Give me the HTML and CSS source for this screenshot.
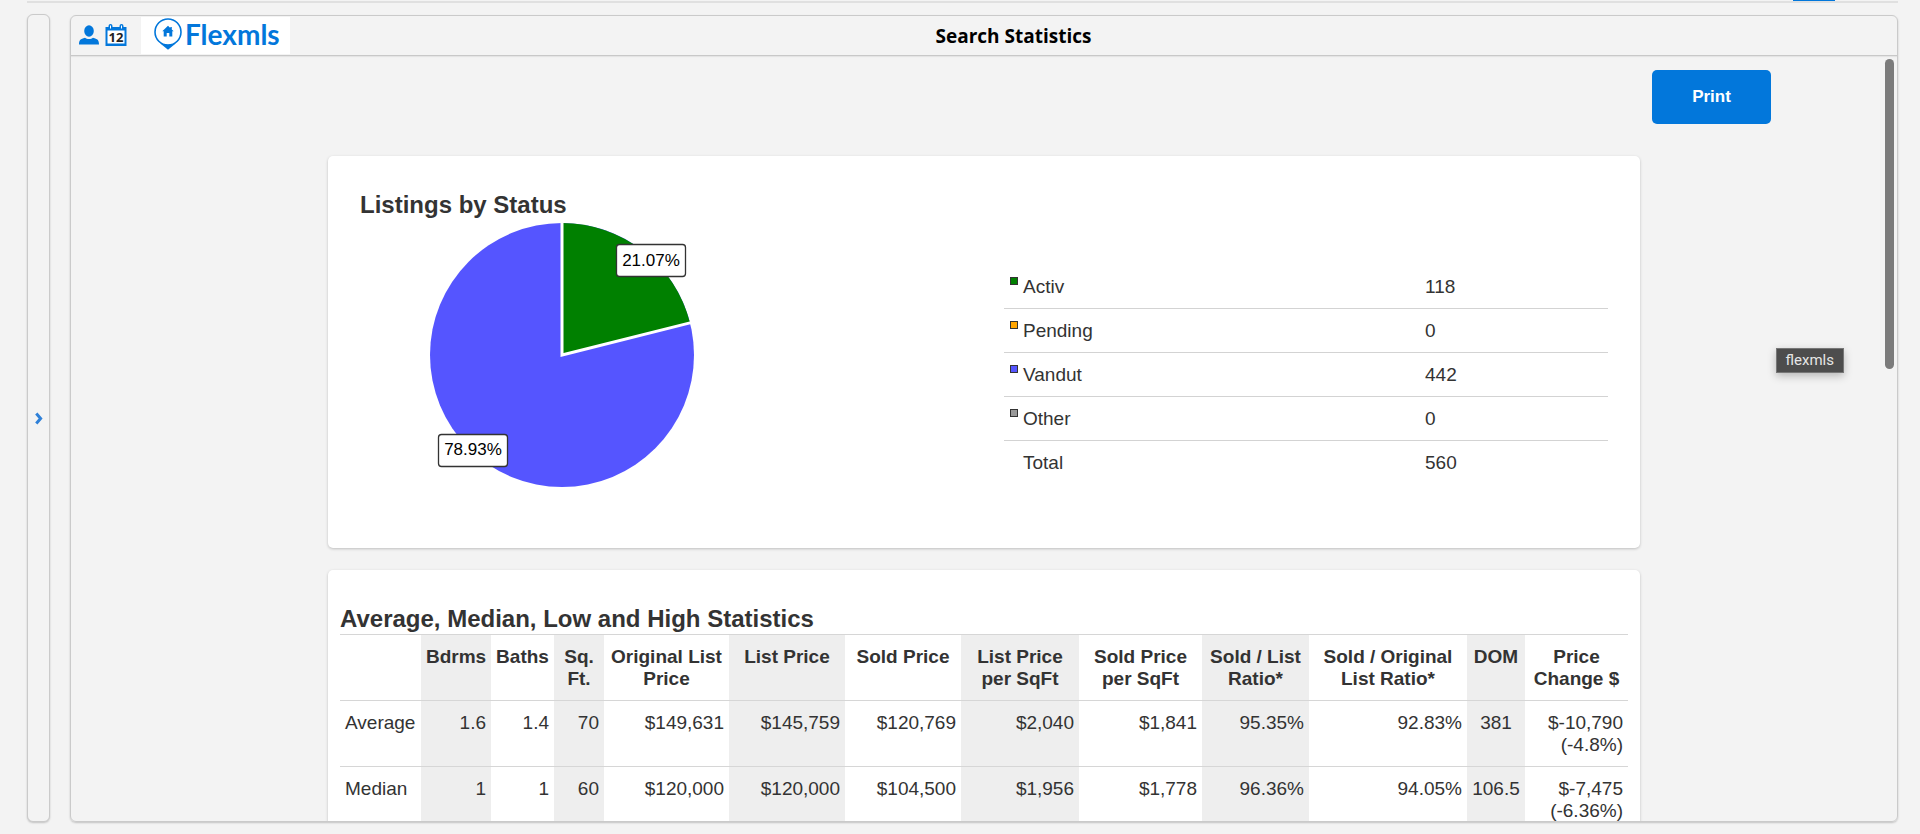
FILE: index.html
```html
<!DOCTYPE html>
<html lang="en">
<head>
<meta charset="utf-8">
<title>Search Statistics</title>
<link rel="stylesheet" href="styles.css">
</head>
<body>
<nav class="tabstrip"><span class="tabstrip-active"></span></nav>
<div class="workspace">
  <button class="rail" type="button" aria-label="Expand menu">
    <svg class="rail-icon" viewBox="0 0 8 13" aria-hidden="true"><path d="M1.300 1.500 5.600 6.500 1.300 11.500"/></svg>
  </button>
  <main class="panel">
    <header class="panel-head">
      <div class="tools">
        <svg class="tool-icon" viewBox="0 0 20 20" aria-hidden="true"><ellipse cx="10" cy="6" rx="4.800" ry="5.800"/><path d="M0 19.500c0-4.500 1.500-5.600 6-6.700 1 .8 2.300 1.300 4 1.300s3-.5 4-1.300c4.500 1.100 6 2.200 6 6.700z"/></svg>
        <svg class="tool-icon tool-calendar" viewBox="0 0 22 22" aria-hidden="true"><path d="M.5 3h3V2a2 2 0 0 1 4 0v1h7V2a2 2 0 0 1 4 0v1h3v19H.5z"/><path class="ring" d="M5.500 1.500v3M16.500 1.500v3"/><rect class="sheet" x="2.500" y="6.500" width="17" height="13"/><text x="11" y="17.500">12</text></svg>
        <div class="brand">
          <svg class="brand-pin" viewBox="0 0 28 32" aria-hidden="true"><circle class="pin-ring" cx="14" cy="14" r="13"/><path d="M6 25.300Q14 28.500 22 25.300L14 31.800z"/><path d="M14 7.800 8.300 13.300h1.400V18.500h3v-3.600h2.600v3.600h3v-5.200h1.400l-1.900-1.900V9h-1.500v1z"/></svg>
          <span class="brand-name">Flexmls</span>
        </div>
      </div>
      <h1 class="panel-title">Search Statistics</h1>
    </header>
    <div class="panel-body">
      <div class="actions"><button class="print" type="button">Print</button></div>
      <div class="cards">
        <section class="card">
          <h2 class="card-title">Listings by Status</h2>
          <div class="status">
            <svg class="pie" viewBox="0 0 404 294" role="img" aria-label="Activ 21.07%, Vandut 78.93%">
              <circle class="slice-sold" cx="202" cy="133" r="132"/>
              <path class="slice-active" d="M202 133V1A132 132 0 0 1 330.020 100.850Z"/>
              <path class="divider" d="M202 0V133L331 100.600"/>
              <rect class="tag" x="256.500" y="22.500" width="69" height="32" rx="3"/>
              <text class="tag-text" x="291" y="44">21.07%</text>
              <rect class="tag" x="78.500" y="212.500" width="69" height="32" rx="3"/>
              <text class="tag-text" x="113" y="233">78.93%</text>
            </svg>
            <table class="legend">
              <tr><td class="key"><span class="swatch swatch-active"></span></td><td>Activ</td><td class="count">118</td></tr>
              <tr><td class="key"><span class="swatch swatch-pending"></span></td><td>Pending</td><td class="count">0</td></tr>
              <tr><td class="key"><span class="swatch swatch-sold"></span></td><td>Vandut</td><td class="count">442</td></tr>
              <tr><td class="key"><span class="swatch swatch-other"></span></td><td>Other</td><td class="count">0</td></tr>
              <tr><td class="key"></td><td>Total</td><td class="count">560</td></tr>
            </table>
          </div>
        </section>
        <section class="card card-wide">
          <h2 class="card-title">Average, Median, Low and High Statistics</h2>
          <table class="stats">
            <colgroup>
              <col class="w-label"><col class="w-beds shade"><col class="w-baths"><col class="w-sqft shade"><col class="w-orig"><col class="w-price shade"><col class="w-price"><col class="w-listsq shade"><col class="w-soldsq"><col class="w-ratio shade"><col class="w-origratio"><col class="w-dom shade"><col class="w-change">
            </colgroup>
            <thead>
              <tr><td></td><th>Bdrms</th><th>Baths</th><th>Sq. Ft.</th><th>Original List Price</th><th>List Price</th><th>Sold Price</th><th>List Price per SqFt</th><th>Sold Price per SqFt</th><th>Sold / List Ratio*</th><th>Sold / Original List Ratio*</th><th>DOM</th><th>Price Change $</th></tr>
            </thead>
            <tbody>
              <tr><th scope="row">Average</th><td>1.6</td><td>1.4</td><td>70</td><td>$149,631</td><td>$145,759</td><td>$120,769</td><td>$2,040</td><td>$1,841</td><td>95.35%</td><td>92.83%</td><td class="mid">381</td><td>$-10,790<br>(-4.8%)</td></tr>
              <tr><th scope="row">Median</th><td>1</td><td>1</td><td>60</td><td>$120,000</td><td>$120,000</td><td>$104,500</td><td>$1,956</td><td>$1,778</td><td>96.36%</td><td>94.05%</td><td class="mid">106.5</td><td>$-7,475<br>(-6.36%)</td></tr>
            </tbody>
          </table>
        </section>
      </div>
      <div class="thumb"></div>
      <div class="tooltip" role="tooltip">flexmls</div>
    </div>
  </main>
</div>
</body>
</html>
```

FILE: styles.css
```css
* { box-sizing: border-box; }

body {
  margin: 0;
  height: 100vh;
  overflow: hidden;
  display: flex;
  flex-direction: column;
  padding: 0 22px 12px 27px;
  background: #f3f3f3;
  color: #333;
  font-family: "Liberation Sans", Arial, sans-serif;
  font-size: 19px;
  line-height: 22px;
}

.tabstrip {
  display: flex;
  justify-content: flex-end;
  height: 3px;
  padding-right: 63px;
  border-bottom: 2px solid #e0e0e0;
}
.tabstrip-active { width: 42px; height: 1px; background: #0277db; }

.workspace {
  flex: 1;
  min-height: 0;
  display: flex;
  gap: 20px;
  padding-top: 11px;
}

.rail {
  width: 23px;
  padding: 0;
  display: flex;
  align-items: center;
  justify-content: center;
  background: #f3f3f3;
  border: 1px solid #cacaca;
  border-radius: 6px;
  box-shadow: 0 1px 2px rgba(0, 0, 0, .2);
}
.rail-icon { width: 8px; height: 13px; fill: none; stroke: #2f80d8; stroke-width: 3; }

.panel {
  flex: 1;
  min-width: 0;
  display: flex;
  flex-direction: column;
  margin-top: 1px;
  overflow: hidden;
  border: 1px solid #cacaca;
  border-radius: 6px;
  box-shadow: 0 1px 2px rgba(0, 0, 0, .2);
}

.panel-head {
  display: flex;
  align-items: center;
  height: 40px;
  flex: none;
  padding-right: 160px;
  border-bottom: 1px solid #c8c8c8;
  box-shadow: 0 1px 1px rgba(0, 0, 0, .06);
}
.tools { display: flex; align-items: center; gap: 6px; padding-left: 8px; }
.tool-icon { width: 20px; height: 20px; margin-bottom: 2px; fill: #0277db; }
.tool-calendar { width: 22px; height: 22px; }
.tool-calendar .ring { stroke: #fff; stroke-width: 1; }
.tool-calendar .sheet { fill: #fff; }
.tool-calendar text {
  fill: #222;
  font: bold 13px "Open Sans", sans-serif;
  text-anchor: middle;
}
.brand {
  display: flex;
  align-items: flex-start;
  gap: 3px;
  width: 149px;
  height: 37px;
  margin-left: 8px;
  padding: 1px 0 0 13px;
  background: #fff;
  color: #0277db;
}
.brand-pin { width: 28px; height: 32px; flex: none; fill: #0277db; }
.pin-ring { fill: none; stroke: #0277db; stroke-width: 1.6; }
.brand-name { font: 700 28px/33px Lato, sans-serif; }
.panel-title {
  flex: 1;
  margin: 0;
  color: #000;
  font: 700 19px/26px "Open Sans", sans-serif;
  text-align: center;
}

.panel-body { position: relative; flex: 1; min-height: 0; overflow: hidden; padding-top: 14px; }
.actions { display: flex; justify-content: flex-end; margin-bottom: 32px; padding-right: 126px; }
.print {
  width: 119px;
  height: 54px;
  border: 0;
  border-radius: 5px;
  background: #0277db;
  color: #fff;
  font: bold 17px/22px "Liberation Sans", Arial, sans-serif;
}

.cards {
  display: flex;
  flex-direction: column;
  gap: 22px;
  max-width: 1312px;
  margin: 0 auto;
}
.card {
  padding: 32px;
  background: #fff;
  border-radius: 5px;
  box-shadow: 0 1px 3px rgba(0, 0, 0, .22);
}
.card-wide { padding: 33px 12px; }
.card-title { margin: 0; font-size: 24px; line-height: 34px; }
.card-wide .card-title { line-height: 31px; }

.status { display: grid; grid-template-columns: 1fr 1fr; gap: 40px; align-items: center; }
.pie { width: 404px; height: 294px; }
.slice-sold { fill: #55f; }
.slice-active { fill: #008000; }
.divider { fill: none; stroke: #fff; stroke-width: 3; }
.tag { fill: #fff; stroke: #333; stroke-width: 1.3; }
.tag-text { fill: #000; font-size: 17px; text-anchor: middle; }

table { width: 100%; border-collapse: collapse; }
td, th { vertical-align: top; }
.legend { margin-top: 10px; }
.legend td { padding: 11px 0 10px; border-bottom: 1px solid #d3d3d3; }
.legend tr:last-child td { border-bottom: 0; }
.legend .key { width: 19px; padding: 12px 0 0 6px; line-height: 0; }
.legend .count { width: 183px; }
.swatch { display: inline-block; width: 8px; height: 8px; border: 1px solid #333; }
.swatch-active { background: #008000; }
.swatch-pending { background: #ffa500; }
.swatch-sold { background: #55f; }
.swatch-other { background: #999; }

.stats { table-layout: fixed; }
.stats tr { border-top: 1px solid #d6d6d6; }
.stats th, .stats td { padding: 11px 5px 10px; }
.stats tbody td { text-align: right; }
.stats tbody th { font-weight: normal; text-align: left; }
.stats thead th, .stats tbody .mid { text-align: center; }
.shade { background: #eee; }
.w-label { width: 81px; }
.w-beds { width: 70px; }
.w-baths { width: 63px; }
.w-sqft { width: 50px; }
.w-orig { width: 125px; }
.w-price { width: 116px; }
.w-listsq { width: 118px; }
.w-soldsq { width: 123px; }
.w-ratio { width: 107px; }
.w-origratio { width: 158px; }
.w-dom { width: 58px; }
.w-change { width: 103px; }

.thumb {
  position: absolute;
  top: 3px;
  right: 3px;
  width: 9px;
  height: 310px;
  border-radius: 5px;
  background: #7b7b7b;
}
.tooltip {
  position: absolute;
  top: 292px;
  right: 53px;
  padding: 0 9px;
  border: 1px solid #777;
  background: #4d4d4d;
  box-shadow: 0 3px 8px rgba(0, 0, 0, .25);
  color: #e6e6e6;
  font: 15px/23px Roboto, sans-serif;
}
```
